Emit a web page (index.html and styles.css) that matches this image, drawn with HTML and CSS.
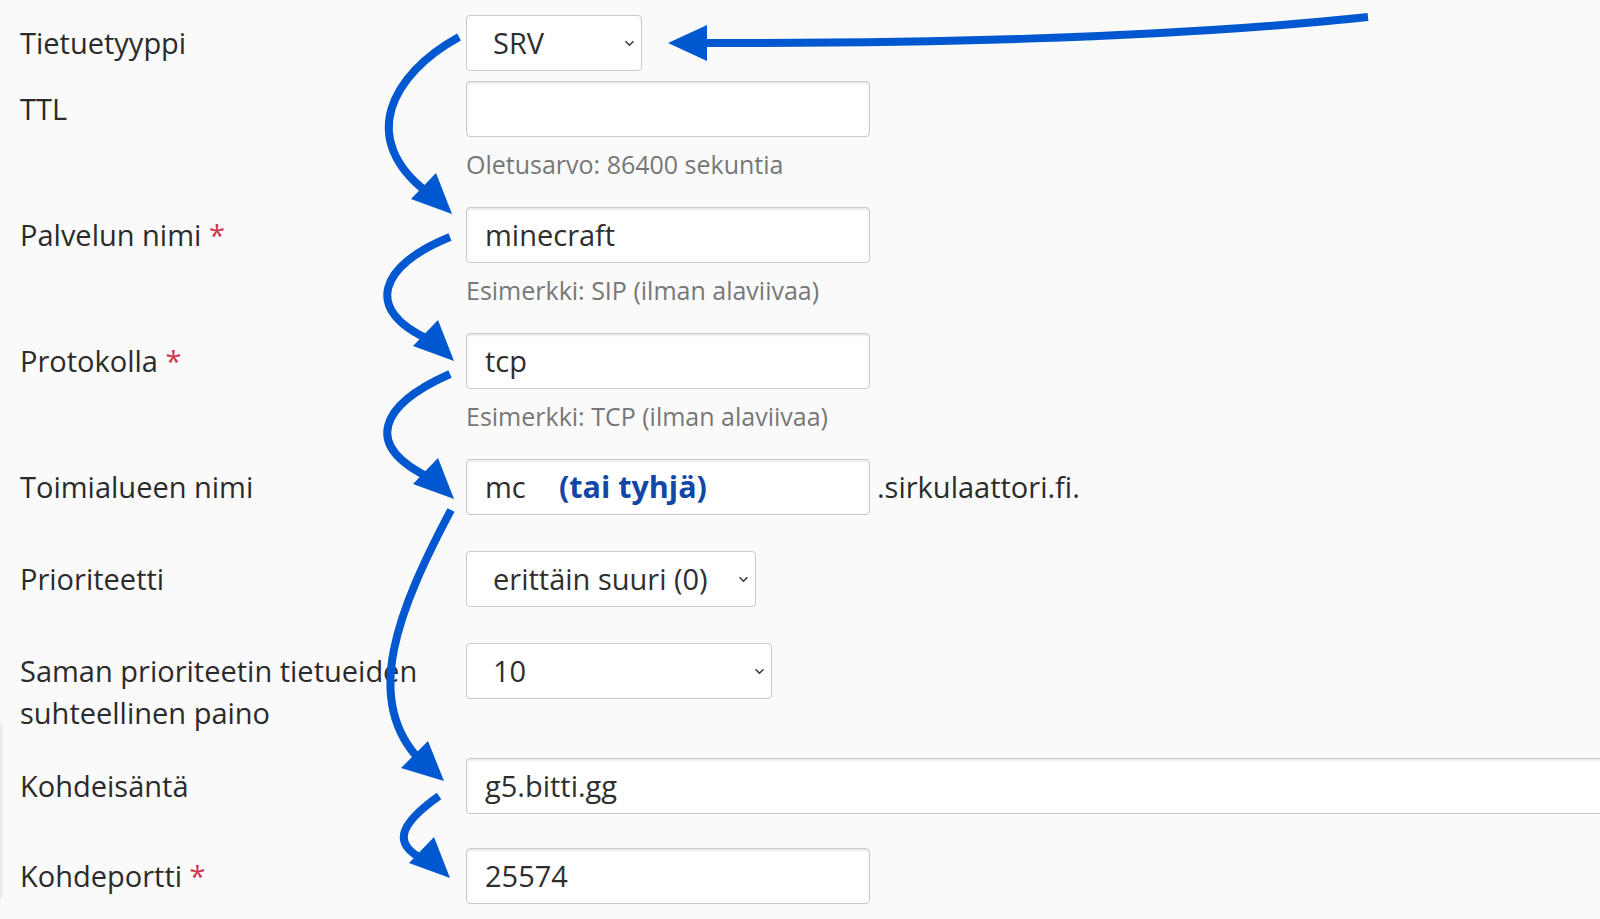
FILE: index.html
```html
<!DOCTYPE html>
<html lang="fi">
<head>
<meta charset="utf-8">
<title>SRV-tietue</title>
<link rel="stylesheet" href="styles.css">
</head>
<body>
<div class="page">
  <div class="edge"></div>
  <form class="form">
    <div class="row row-tight">
      <div class="lbl">Tietuetyyppi</div>
      <div class="field">
        <div class="select w-srv"><span>SRV</span><svg class="chev" viewBox="0 0 12 8"><path d="M1.5 1.5 L6 6 L10.5 1.5" /></svg></div>
      </div>
    </div>
    <div class="row row-hint">
      <div class="lbl">TTL</div>
      <div class="field">
        <div class="input w-std"></div>
        <div class="hint">Oletusarvo: 86400 sekuntia</div>
      </div>
    </div>
    <div class="row row-hint">
      <div class="lbl">Palvelun nimi <span class="req">*</span></div>
      <div class="field">
        <div class="input w-std">minecraft</div>
        <div class="hint">Esimerkki: SIP (ilman alaviivaa)</div>
      </div>
    </div>
    <div class="row row-hint">
      <div class="lbl">Protokolla <span class="req">*</span></div>
      <div class="field">
        <div class="input w-std">tcp</div>
        <div class="hint">Esimerkki: TCP (ilman alaviivaa)</div>
      </div>
    </div>
    <div class="row">
      <div class="lbl">Toimialueen nimi</div>
      <div class="field field-inline">
        <div class="input-wrap">
          <div class="input w-std">mc</div>
          <span class="note">(tai tyhjä)</span>
        </div>
        <span class="suffix">.sirkulaattori.fi.</span>
      </div>
    </div>
    <div class="row">
      <div class="lbl">Prioriteetti</div>
      <div class="field">
        <div class="select w-prio"><span>erittäin suuri (0)</span><svg class="chev" viewBox="0 0 12 8"><path d="M1.5 1.5 L6 6 L10.5 1.5" /></svg></div>
      </div>
    </div>
    <div class="row row-two">
      <div class="lbl lbl-two">Saman prioriteetin tietueiden suhteellinen paino</div>
      <div class="field">
        <div class="select w-weight"><span>10</span><svg class="chev" viewBox="0 0 12 8"><path d="M1.5 1.5 L6 6 L10.5 1.5" /></svg></div>
      </div>
    </div>
    <div class="row row-last">
      <div class="lbl">Kohdeisäntä</div>
      <div class="field">
        <div class="input w-wide">g5.bitti.gg</div>
      </div>
    </div>
    <div class="row">
      <div class="lbl">Kohdeportti <span class="req">*</span></div>
      <div class="field">
        <div class="input w-std">25574</div>
      </div>
    </div>
  </form>

  <svg class="arrows" viewBox="0 0 1600 919" width="1600" height="919">
    <g fill="none" stroke="#0058d0" stroke-width="8" stroke-linecap="butt">
      <path d="M1368,17 C1150,40 900,43 704,43" />
      <path d="M459,37 C390,75 358,140 428,193" />
      <path d="M450,237 C380,265 362,310 430,340" />
      <path d="M450,374 C380,405 362,445 430,478" />
      <path d="M451,510 C398,610 362,700 420,760" />
      <path d="M439,796 C398,825 392,845 425,860" />
    </g>
    <g fill="#0058d0">
      <polygon points="668,43 707,25 707,61" />
      <polygon points="452,214 411,199 436,173" />
      <polygon points="454,361 413,346 438,320" />
      <polygon points="454,499 413,484 438,458" />
      <polygon points="444,781 401,768 428,741" />
      <polygon points="450,878 409,863 434,837" />
    </g>
  </svg>
</div>
</body>
</html>
```

FILE: styles.css
```css
* { box-sizing: border-box; }

html, body {
  margin: 0;
  padding: 0;
  background: #fafafa;
  overflow: hidden;
}

.page {
  position: relative;
  width: 1600px;
  height: 919px;
  overflow: hidden;
  font-family: "Open Sans", "Noto Sans", sans-serif;
  color: #2b2b2b;
}

.edge {
  position: absolute;
  left: -20px;
  top: 722px;
  width: 23px;
  height: 178px;
  background: #ebebeb;
  border-radius: 0 6px 6px 0;
}

.form {
  padding: 15px 0 0 20px;
}

.row {
  display: grid;
  grid-template-columns: 446px 1fr;
  align-items: start;
  margin-bottom: 36px;
}

.row-tight { margin-bottom: 10px; }
.row-hint { margin-bottom: 26px; }
.row-two { margin-bottom: 24px; }
.row-last { margin-bottom: 34px; }

.lbl {
  font-size: 29px;
  line-height: 42px;
  padding-top: 7px;
  white-space: nowrap;
}

.lbl-two {
  white-space: normal;
  width: 425px;
}

.req { color: #d1344c; }

.field {
  display: flex;
  flex-direction: column;
  align-items: flex-start;
}

.field-inline {
  flex-direction: row;
  align-items: center;
}

.input, .select {
  height: 56px;
  background: #fff;
  border: 1px solid #c9c9c9;
  border-radius: 4px;
  box-shadow: inset 0 2px 2px rgba(0, 0, 0, 0.08);
  font-size: 29px;
  line-height: 54px;
  color: #2e2e2e;
  padding-left: 18px;
  white-space: nowrap;
}

.select {
  display: flex;
  align-items: center;
  justify-content: space-between;
  padding: 0 6px 0 26px;
  box-shadow: none;
}

.chev {
  width: 11px;
  height: 7px;
  fill: none;
  stroke: #333;
  stroke-width: 1.7;
}

.w-srv { width: 176px; }
.w-std { width: 404px; }
.w-prio { width: 290px; }
.w-weight { width: 306px; }
.w-wide { width: 1300px; }

.hint {
  font-size: 25px;
  line-height: 34px;
  margin-top: 10px;
  color: #777;
}

.input-wrap {
  position: relative;
}

.note {
  position: absolute;
  left: 93px;
  top: 6px;
  font-size: 30.5px;
  line-height: 42px;
  font-weight: 700;
  color: #1148a8;
}

.suffix {
  margin-left: 7px;
  font-size: 29px;
  line-height: 42px;
}

.arrows {
  position: absolute;
  left: 0;
  top: 0;
  pointer-events: none;
}
```
